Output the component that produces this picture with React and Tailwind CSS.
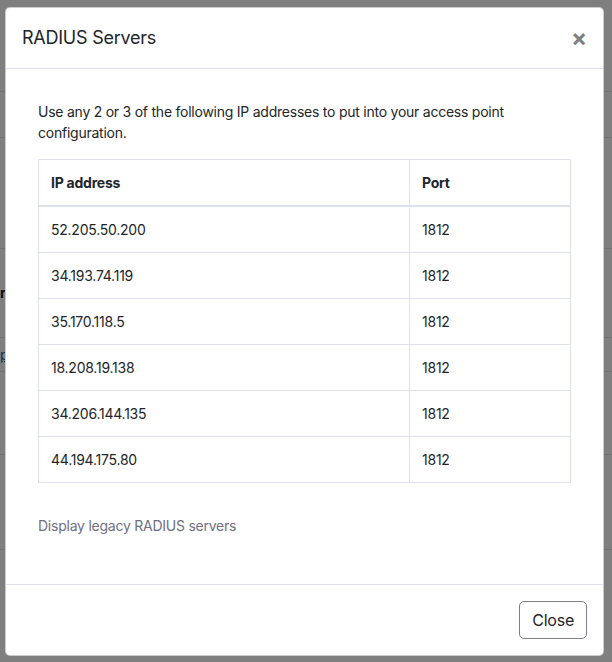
import React from 'react';

const servers = [
    '52.205.50.200',
    '34.193.74.119',
    '35.170.118.5',
    '18.208.19.138',
    '34.206.144.135',
    '44.194.175.80',
];

const App = () => {
    return (
        <div className="relative h-[662px] w-[612px] overflow-hidden bg-white font-['Inter',sans-serif] tracking-[-0.015em] text-[#212529]">
            {/* page behind the dialog */}
            <div className="flex flex-col">
                <div className="h-[92px] border-b border-[#e5e5e5]"></div>
                <div className="h-[46px] border-b border-[#e5e5e5]"></div>
                <div className="h-[111px] border-b border-[#e5e5e5]"></div>
                <div className="flex h-[89px] items-center border-b border-[#e5e5e5] text-sm font-bold">
                    <span>re</span>
                </div>
                <div className="flex h-[34px] items-center border-b border-[#e5e5e5] text-sm">
                    <span className="text-[#1f5fa8] underline">p</span>
                </div>
                <div className="h-[83px] border-b border-[#e5e5e5]"></div>
                <div className="h-[95px] border-b border-[#e5e5e5]"></div>
            </div>

            {/* backdrop + modal */}
            <div className="absolute inset-0 bg-black/50">
                <div className="ml-[5px] mt-[7px] w-[599px] rounded-[5px] border border-black/20 bg-white">
                    <div className="flex items-center justify-between border-b border-[#dee0ec] p-4">
                        <h5 className="text-lg leading-7">RADIUS Servers</h5>
                        <span className="text-2xl font-bold leading-none text-black/50">×</span>
                    </div>

                    <div className="px-8 pb-8 pt-8">
                        <p className="mb-4 text-sm leading-[21px]">
                            Use any 2 or 3 of the following IP addresses to put into your access point configuration.
                        </p>
                        <table className="w-full border-collapse border border-[#dee0ec] text-sm leading-[21px]">
                            <thead>
                                <tr className="border-b-2 border-[#dee0ec]">
                                    <th className="w-[371px] border-r border-[#dee0ec] px-3 py-3 text-left font-bold">IP address</th>
                                    <th className="px-3 py-3 text-left font-bold">Port</th>
                                </tr>
                            </thead>
                            <tbody>
                                {servers.map((ip) => (
                                    <tr key={ip} className="border-b border-[#dee0ec]">
                                        <td className="border-r border-[#dee0ec] px-3 py-3">{ip}</td>
                                        <td className="px-3 py-3">1812</td>
                                    </tr>
                                ))}
                            </tbody>
                        </table>
                        <p className="mb-4 mt-8 text-sm leading-[21px] text-[#6e7080]">Display legacy RADIUS servers</p>
                    </div>

                    <div className="flex justify-end border-t border-[#dee0ec] p-4">
                        <button className="rounded-[5px] border border-[#7d7f8c] px-3 py-1.5 text-base leading-6 text-[#212529]">
                            Close
                        </button>
                    </div>
                </div>
            </div>
        </div>
    );
};

export default App;
